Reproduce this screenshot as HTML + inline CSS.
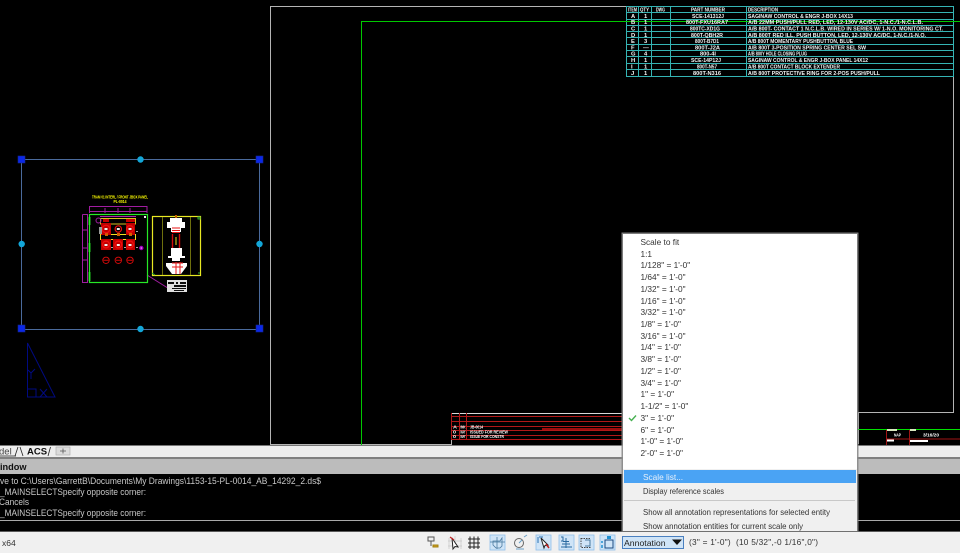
<!DOCTYPE html>
<html><head><meta charset="utf-8"><style>
html,body{margin:0;padding:0;background:#000;width:960px;height:553px;overflow:hidden}
svg{display:block;position:absolute;left:0;top:0;filter:blur(0.3px)}
text{font-family:"Liberation Sans",sans-serif}
</style></head><body>
<svg width="960" height="553" viewBox="0 0 960 553" xmlns="http://www.w3.org/2000/svg">
<defs>
<filter id="b" x="-5%" y="-5%" width="110%" height="110%"><feGaussianBlur stdDeviation="0.25"/></filter>
</defs>
<rect width="960" height="553" fill="#000"/>

<!-- sheet -->
<g fill="none" shape-rendering="crispEdges">
<path d="M270.5 444.5V6.5H953.5V412.5H858.5V444" stroke="#b4b4b4" stroke-width="1"/>
<path d="M270 444.5H451.5V413" stroke="#b4b4b4"/>
<path d="M361.5 445V21.5H960" stroke="#00c800"/>
<path d="M451 413.5H622" stroke="#d8d8d8"/>
<path d="M858 429.5H960" stroke="#00e000" stroke-width="1"/>
</g>

<!-- parts table -->
<g>
<g fill="none" stroke="#35b4b4" stroke-width="1" shape-rendering="crispEdges">
<path d="M626.5 6.5H953M626.5 12.5H953M626.5 19.5H953M626.5 25.5H953M626.5 31.5H953M626.5 37.5H953M626.5 44.5H953M626.5 50.5H953M626.5 56.5H953M626.5 63.5H953M626.5 69.5H953M626.5 76.5H953"/>
<path d="M626.5 6V77M638.5 6V77M651.5 6V77M670.5 6V77M746.5 6V77M953.5 6V77"/>
</g>
<path d="M620 21.5H960" stroke="#00c800" shape-rendering="crispEdges"/>
<g fill="#f4f4f4" font-size="5.8" font-weight="bold">
<text x="628" y="11.5" font-size="5" textLength="9" lengthAdjust="spacingAndGlyphs">ITEM</text>
<text x="640" y="11.5" font-size="5" textLength="9" lengthAdjust="spacingAndGlyphs">QTY</text>
<text x="656" y="11.5" font-size="5" textLength="9" lengthAdjust="spacingAndGlyphs">DWG</text>
<text x="691" y="11.5" font-size="5" textLength="34" lengthAdjust="spacingAndGlyphs">PART NUMBER</text>
<text x="748" y="11.5" font-size="5" textLength="30" lengthAdjust="spacingAndGlyphs">DESCRIPTION</text>
<text x="631" y="18">A</text><text x="631" y="24">B</text><text x="631" y="30.5">C</text><text x="631" y="37">D</text><text x="631" y="43">E</text><text x="631" y="49.5">F</text><text x="631" y="55.5">G</text><text x="631" y="62">H</text><text x="631" y="68.5">I</text><text x="631" y="75">J</text>
<text x="644" y="18">1</text><text x="644" y="24">1</text><text x="644" y="30.5">1</text><text x="644" y="37">1</text><text x="644" y="43">3</text><text x="643" y="49.5">—</text><text x="644" y="55.5">4</text><text x="644" y="62">1</text><text x="644" y="68.5">1</text><text x="644" y="75">1</text>
<text x="692" y="18" textLength="32" lengthAdjust="spacingAndGlyphs">SCE-141312J</text>
<text x="686" y="24" textLength="42" lengthAdjust="spacingAndGlyphs">800T-FXU16RA7</text>
<text x="690" y="30.5" textLength="30" lengthAdjust="spacingAndGlyphs">800TC-XD1G</text>
<text x="691" y="37" textLength="32" lengthAdjust="spacingAndGlyphs">800T-QBH2R</text>
<text x="695" y="43" textLength="24" lengthAdjust="spacingAndGlyphs">800T-B7D1</text>
<text x="695" y="49.5" textLength="25" lengthAdjust="spacingAndGlyphs">800T-J2A</text>
<text x="700" y="55.5" textLength="16" lengthAdjust="spacingAndGlyphs">800-4I</text>
<text x="691" y="62" textLength="30" lengthAdjust="spacingAndGlyphs">SCE-14P12J</text>
<text x="697" y="68.5" textLength="20" lengthAdjust="spacingAndGlyphs">800T-N57</text>
<text x="693" y="75" textLength="28" lengthAdjust="spacingAndGlyphs">800T-N316</text>
<text x="748" y="18" textLength="105" lengthAdjust="spacingAndGlyphs">SAGINAW CONTROL &amp; ENGR J-BOX 14X13</text>
<text x="748" y="24" textLength="175" lengthAdjust="spacingAndGlyphs">A/B 22MM PUSH/PULL RED, LED, 12-130V AC/DC, 1-N.C./1-N.C.L.B.</text>
<text x="748" y="30.5" textLength="195" lengthAdjust="spacingAndGlyphs">A/B 800T- CONTACT 1 N.C.L.B. WIRED IN SERIES W/ 1-N.O. MONITORING CT.</text>
<text x="748" y="37" textLength="178" lengthAdjust="spacingAndGlyphs">A/B 800T RED ILL. PUSH BUTTON, LED, 12-130V AC/DC, 1-N.C./1-N.O.</text>
<text x="748" y="43" textLength="105" lengthAdjust="spacingAndGlyphs">A/B 800T MOMENTARY PUSHBUTTON, BLUE</text>
<text x="748" y="49.5" textLength="118" lengthAdjust="spacingAndGlyphs">A/B 800T 3-POSITION SPRING CENTER SEL SW</text>
<text x="748" y="55.5" font-size="5" textLength="59" lengthAdjust="spacingAndGlyphs">A/B 800Y HOLE CLOSING PLUG</text>
<text x="748" y="62" font-size="5" textLength="120" lengthAdjust="spacingAndGlyphs">SAGINAW CONTROL &amp; ENGR J-BOX PANEL 14X12</text>
<text x="748" y="68.5" textLength="92" lengthAdjust="spacingAndGlyphs">A/B 800T CONTACT BLOCK EXTENDER</text>
<text x="748" y="75" textLength="132" lengthAdjust="spacingAndGlyphs">A/B 800T PROTECTIVE RING FOR 2-POS PUSH/PULL</text>
</g>
</g>

<!-- selection viewport -->
<rect x="21.5" y="159.5" width="238" height="170" fill="none" stroke="#4a6a9c" stroke-width="1"/>
<g fill="#0a28e8" stroke="#16268c" stroke-width=".6">
<rect x="18" y="156" width="7" height="7"/><rect x="256" y="156" width="7" height="7"/>
<rect x="18" y="325" width="7" height="7"/><rect x="256" y="325" width="7" height="7"/>
</g>
<g fill="#12a6d8">
<circle cx="140.5" cy="159.5" r="3.2"/><circle cx="140.5" cy="329" r="3.2"/>
<circle cx="21.7" cy="244" r="3.2"/><circle cx="259.5" cy="244" r="3.2"/>
</g>

<!-- UCS -->
<g fill="none" stroke="#000a80" stroke-width="1">
<path d="M27.5 343V397H55Z"/><path d="M27.5 389H36V397"/>
<path d="M28 370L31 373L35 369M31 373V379"/>
<path d="M40 389L47 397M47 389L40 397"/>
</g>

<!-- detail drawing -->
<g filter="url(#b)">
<text x="120" y="198.5" font-size="4.8" font-weight="bold" fill="#ffff00" text-anchor="middle" textLength="56" lengthAdjust="spacingAndGlyphs">TRAM 01 INTERL / FRONT JBOX PANEL</text>
<text x="120" y="203" font-size="4.4" font-weight="bold" fill="#ffff00" text-anchor="middle" textLength="13" lengthAdjust="spacingAndGlyphs">PL-0014</text>
<g fill="none" stroke="#a01ea0" stroke-width="1">
<path d="M89.5 206.5H147M89.5 211.5H147M89.5 206V213M147 206V213M105 208V213M118 208V213M130 208V213"/>
<path d="M82.5 214.5V282.5H87M82.5 214.5H87M87.5 214V283M82 230H88M82 248H88M82 260H88"/>
<path d="M147 275L167 287.5H170"/>
</g>
<path d="M100 216.5H136" stroke="#b020b0"/>
<rect x="89.5" y="214.5" width="58" height="68" fill="none" stroke="#28e828" stroke-width="1.2"/>
<path d="M89.5 217V225M89.5 243V252M89.5 272V281" stroke="#28f028" stroke-width="1.8"/>
<rect x="100.5" y="218.5" width="35" height="5.5" fill="none" stroke="#d8c020"/>
<rect x="100.5" y="234.5" width="35" height="5" fill="none" stroke="#f0e020"/>
<g fill="#c00000">
<rect x="101" y="223" width="10" height="12"/><rect x="126" y="223" width="9" height="12"/>
<rect x="101" y="239" width="10" height="11"/><rect x="113" y="239" width="10" height="11"/><rect x="126" y="239" width="9" height="11"/>
<rect x="103" y="219" width="6" height="3"/><rect x="126" y="219" width="9" height="3"/>
<rect x="105" y="233" width="3" height="3" fill="#d06000"/><rect x="117" y="233" width="3" height="3" fill="#d06000"/><rect x="129" y="233" width="3" height="3" fill="#d06000"/>
</g>
<g fill="none" stroke="#f01010" stroke-width="1.2">
<circle cx="106" cy="229" r="3.8"/><circle cx="118.3" cy="229" r="3.2"/><circle cx="130" cy="229" r="3.4"/>
<circle cx="106" cy="244.5" r="3.4"/><circle cx="118.3" cy="244.5" r="3.4"/><circle cx="130" cy="244.5" r="3.4"/>
</g>
<g fill="none" stroke="#d00808" stroke-width="1">
<circle cx="106" cy="260.3" r="3.2"/><circle cx="118.3" cy="260.3" r="3.2"/><circle cx="130" cy="260.3" r="3.2"/>
<path d="M103.5 260.3H108.5M116 260.3H121M127.5 260.3H132.5"/>
</g>
<g fill="#f0f0f0">
<rect x="104.5" y="228" width="3" height="2"/><rect x="116.8" y="228" width="3" height="2"/><rect x="128.5" y="228" width="3" height="2"/>
<rect x="104.5" y="244" width="3" height="2"/><rect x="116.8" y="244" width="3" height="2"/><rect x="128.5" y="244" width="3" height="2"/>
<rect x="99" y="227" width="3" height="7" fill="#999"/>
<rect x="144" y="216" width="2" height="2"/><rect x="111" y="247" width="2" height="1" fill="#aaa"/><rect x="124" y="247" width="2" height="1" fill="#aaa"/><rect x="136" y="247" width="2" height="1" fill="#aaa"/><rect x="136" y="231" width="2" height="1" fill="#aaa"/>
</g>
<circle cx="141.3" cy="248" r="2.2" fill="#a000c0"/><circle cx="141.3" cy="248" r="0.8" fill="#f0a0f0"/>
<circle cx="98.5" cy="220.5" r="2.5" fill="none" stroke="#a01ea0"/>
<rect x="152.5" y="216.5" width="48" height="59" fill="none" stroke="#e8e820" stroke-width="1.2"/>
<path d="M162.5 217V275M190.5 217V275" stroke="#6e7010" stroke-width="1"/>
<path d="M198 217h2v2h-2zM152 273l3 2M198 273h2" stroke="#30b030" fill="none"/>
<g fill="#ffffff">
<path d="M170 218H182V222H185V228H181V232H171V228H167V222H170Z"/>
<path d="M171 248H182V256H185V258H180V261H172V258H168V256H171Z"/>
<path d="M166 263H187V266L184 270L181 274H172L169 270L166 266Z"/>
</g>
<g fill="none" stroke="#e81818" stroke-width="1">
<path d="M172 228H180M172 230.5H180M172 232.5H180"/>
<path d="M172.5 234V248M179.5 234V248" stroke="#d01010" stroke-width="1.4"/>
<path d="M172 263H183M172 267H183M176 262V274M180 262V274"/>
</g>
<path d="M176 237V245" stroke="#e8e020" stroke-width="1"/>
<path d="M176 215v3" stroke="#c06000" stroke-width="2"/>
<rect x="167" y="280" width="20" height="12" fill="#e0e0e0"/>
<g fill="#111"><rect x="168" y="282" width="6" height="2"/><rect x="176" y="282" width="2" height="2"/><rect x="180" y="282" width="6" height="2"/><rect x="174" y="285" width="12" height="2"/><rect x="172" y="288" width="14" height="1"/><rect x="174" y="290" width="10" height="1"/></g>
</g>

<!-- title blocks bottom -->
<g>
<g stroke="#b01818" stroke-width="1" fill="none" shape-rendering="crispEdges">
<path d="M451 416.5H622M451 421.5H622M451 426.5H622M451 430.5H622M451 435.5H622M451 439.5H622"/>
<path d="M451.5 413V440M459.5 413V440M466.5 413V440"/>
</g>
<path d="M542 429H622" stroke="#d01010" stroke-width="1.4"/>
<g fill="#fff" font-size="4.6" font-weight="bold">
<text x="453" y="428.5" textLength="4" lengthAdjust="spacingAndGlyphs">A</text><text x="460.5" y="428.5" textLength="5" lengthAdjust="spacingAndGlyphs">INK</text><text x="470" y="428.5" textLength="13" lengthAdjust="spacingAndGlyphs">JB-0014</text>
<text x="453" y="433.5" textLength="3" lengthAdjust="spacingAndGlyphs">0</text><text x="460.5" y="433.5" textLength="5" lengthAdjust="spacingAndGlyphs">MAY</text><text x="470" y="433.5" textLength="38" lengthAdjust="spacingAndGlyphs">ISSUED FOR REVIEW</text>
<text x="453" y="438" textLength="3" lengthAdjust="spacingAndGlyphs">0</text><text x="460.5" y="438" textLength="5" lengthAdjust="spacingAndGlyphs">MAY</text><text x="470" y="438" textLength="34" lengthAdjust="spacingAndGlyphs">ISSUE FOR CONSTR</text>
</g>
<path d="M886.5 430V445M909.5 430V445" stroke="#a01414" fill="none"/>
<path d="M886 439H960" stroke="#a01414"/>
<g font-size="4.6" fill="#fff" font-weight="bold">
<rect x="887" y="429" width="10" height="2" fill="#d8e8c0"/><rect x="910" y="429" width="6" height="2" fill="#d8e8c0"/>
<text x="894" y="436.5" textLength="7" lengthAdjust="spacingAndGlyphs">NAP</text>
<text x="923" y="436.5" textLength="16" lengthAdjust="spacingAndGlyphs">3/16/20</text>
<rect x="887" y="439.5" width="7" height="2"/><rect x="910" y="440" width="18" height="2"/>
</g>
</g>

<!-- tab bar -->
<rect x="0" y="445.5" width="960" height="12" fill="#eeeeee"/>
<rect x="0" y="457" width="960" height="2" fill="#808080"/>
<rect x="0" y="459" width="960" height="15" fill="#bcbcbc"/>
<text x="-1" y="454.5" font-size="9.5" fill="#444">del</text>
<path d="M0 456H16M15 456L18 447M20 447L23 456M48 456L50.5 447" fill="none" stroke="#222" stroke-width=".8"/>
<text x="27" y="454.5" font-size="9.5" font-weight="bold" fill="#111">ACS</text>
<rect x="56" y="447" width="14" height="8" fill="#dcdcdc" stroke="#a8a8a8" stroke-width=".6"/>
<path d="M60 451H66M63 448.5V453.5" stroke="#555" stroke-width=".8"/>
<text x="0" y="470" font-size="9.2" font-weight="bold" fill="#111">indow</text>

<!-- command area -->
<rect x="0" y="474" width="960" height="58" fill="#000"/>
<path d="M0 520.5H960" stroke="#a8a8a8" stroke-width="1" shape-rendering="crispEdges"/>
<g font-size="9.2" fill="#c8c8c8">
<text x="0" y="484" textLength="321" lengthAdjust="spacingAndGlyphs">ve to C:\Users\GarrettB\Documents\My Drawings\1153-15-PL-0014_AB_14292_2.ds$</text>
<text x="0" y="495" textLength="146" lengthAdjust="spacingAndGlyphs">_MAINSELECTSpecify opposite corner:</text>
<text x="-1" y="505" textLength="30" lengthAdjust="spacingAndGlyphs">Cancels</text>
<text x="0" y="516" textLength="146" lengthAdjust="spacingAndGlyphs">_MAINSELECTSpecify opposite corner:</text>
</g>

<!-- status bar -->
<rect x="0" y="532" width="960" height="21" fill="#f0f0f0"/>
<path d="M0 531.5H960" stroke="#5a5a5a" stroke-width="1" shape-rendering="crispEdges"/>
<text x="2" y="546" font-size="8.5" fill="#333">x64</text>
<g fill="#cfe4f7" stroke="#8fc0ea" stroke-width=".8">
<rect x="490" y="535" width="15" height="15"/>
<rect x="536" y="535" width="15" height="15"/>
<rect x="559" y="535" width="15" height="15"/>
<rect x="579" y="535" width="15" height="15"/>
<rect x="600" y="535" width="15" height="15"/>
</g>
<g fill="none" stroke-width="1">
<path d="M428 537H434V541H428ZM431 541V546" stroke="#555"/><path d="M433 545H438V547H433Z" fill="#d4a020" stroke="#a08010"/>
<path d="M449 538V549M455 536V549M461 538V549M448 541H462M448 546H462" stroke="#c8c8c8" stroke-width=".7"/>
<path d="M452 538L458 547L455 546.5L453 549Z" fill="#fff" stroke="#222"/><path d="M450 537l4 3" stroke="#c02020" stroke-width="1.2"/>
<path d="M470 536.5V549M474 536.5V549M478 536.5V549M468 539H480M468 543H480M468 547H480" stroke="#222" stroke-width="1"/>
<path d="M493 541H500L502 538V546L500 548H496L493 545ZM490 542H505M497 537V549" stroke="#4a7aa0" stroke-width=".8"/>
<circle cx="519" cy="543" r="4.5" stroke="#666"/><path d="M519 543L522 540M524 537l3-2M516 549h8" stroke="#6aa0c8"/>
<path d="M538 537V543M543 537H539" stroke="#2a70b0"/><path d="M541 538L548 545L545 545.5L544 548Z" fill="#fff" stroke="#222"/><path d="M546 544l3 4" stroke="#c02020" stroke-width="1.5"/>
<path d="M561 537h2v4h-2M566 538V548M563 541.5H569M562 544H570M561 547H572" stroke="#2a6aa0"/>
<path d="M581 538.5H590V547.5H581Z" stroke="#444" stroke-dasharray="1.5 1"/><path d="M585 540H590V546H585" stroke="#4a7aa0"/>
<path d="M605 540H613V548H605Z" stroke="#1a4a80"/><path d="M602 541V543M602 545V548" stroke="#2090d0" stroke-width="1.5"/><path d="M607 536H611V539H607Z" fill="#2090d0" stroke="none"/>
</g>
<rect x="622.5" y="536.5" width="61" height="12" fill="#cfe4f7" stroke="#4a80c0" stroke-width="1"/>
<text x="624" y="546" font-size="8.7" fill="#222">Annotation</text>
<path d="M672 539.5H682L677 545Z" fill="#111"/>
<text x="689" y="545" font-size="8.3" fill="#333" textLength="129" lengthAdjust="spacing" xml:space="preserve">(3" = 1'-0")  (10 5/32",-0 1/16",0")</text>

<!-- popup menu -->
<rect x="621.5" y="232.5" width="237" height="299" fill="#8a8a8a" opacity=".9"/>
<rect x="623" y="234" width="234" height="235" fill="#fff"/>
<rect x="623" y="469" width="234" height="62" fill="#f0f0f0"/>
<rect x="624" y="470" width="232" height="13" fill="#4aa3f4"/>
<path d="M624 500.5H855" stroke="#c8c8c8" shape-rendering="crispEdges"/>
<g font-size="8.3" fill="#333">
<text x="640.5" y="245">Scale to fit</text>
<text x="640.5" y="257">1:1</text>
<text x="640.5" y="268">1/128" = 1'-0"</text>
<text x="640.5" y="280">1/64" = 1'-0"</text>
<text x="640.5" y="292">1/32" = 1'-0"</text>
<text x="640.5" y="304">1/16" = 1'-0"</text>
<text x="640.5" y="315">3/32" = 1'-0"</text>
<text x="640.5" y="327">1/8" = 1'-0"</text>
<text x="640.5" y="339">3/16" = 1'-0"</text>
<text x="640.5" y="350">1/4" = 1'-0"</text>
<text x="640.5" y="362">3/8" = 1'-0"</text>
<text x="640.5" y="374">1/2" = 1'-0"</text>
<text x="640.5" y="386">3/4" = 1'-0"</text>
<text x="640.5" y="397">1" = 1'-0"</text>
<text x="640.5" y="409">1-1/2" = 1'-0"</text>
<text x="640.5" y="421">3" = 1'-0"</text>
<text x="640.5" y="433">6" = 1'-0"</text>
<text x="640.5" y="444">1'-0" = 1'-0"</text>
<text x="640.5" y="456">2'-0" = 1'-0"</text>
<text x="643" y="480" fill="#e8f0fa">Scale list...</text>
<text x="643" y="494" font-size="8.6" textLength="81" lengthAdjust="spacingAndGlyphs">Display reference scales</text>
<text x="643" y="515" font-size="8.6" textLength="187" lengthAdjust="spacingAndGlyphs">Show all annotation representations for selected entity</text>
<text x="643" y="529" font-size="8.6" textLength="160" lengthAdjust="spacingAndGlyphs">Show annotation entities for current scale only</text>
</g>
<path d="M629 418L631.5 420.5L636 415.5" fill="none" stroke="#45b050" stroke-width="1.4"/>
</svg>
</body></html>
